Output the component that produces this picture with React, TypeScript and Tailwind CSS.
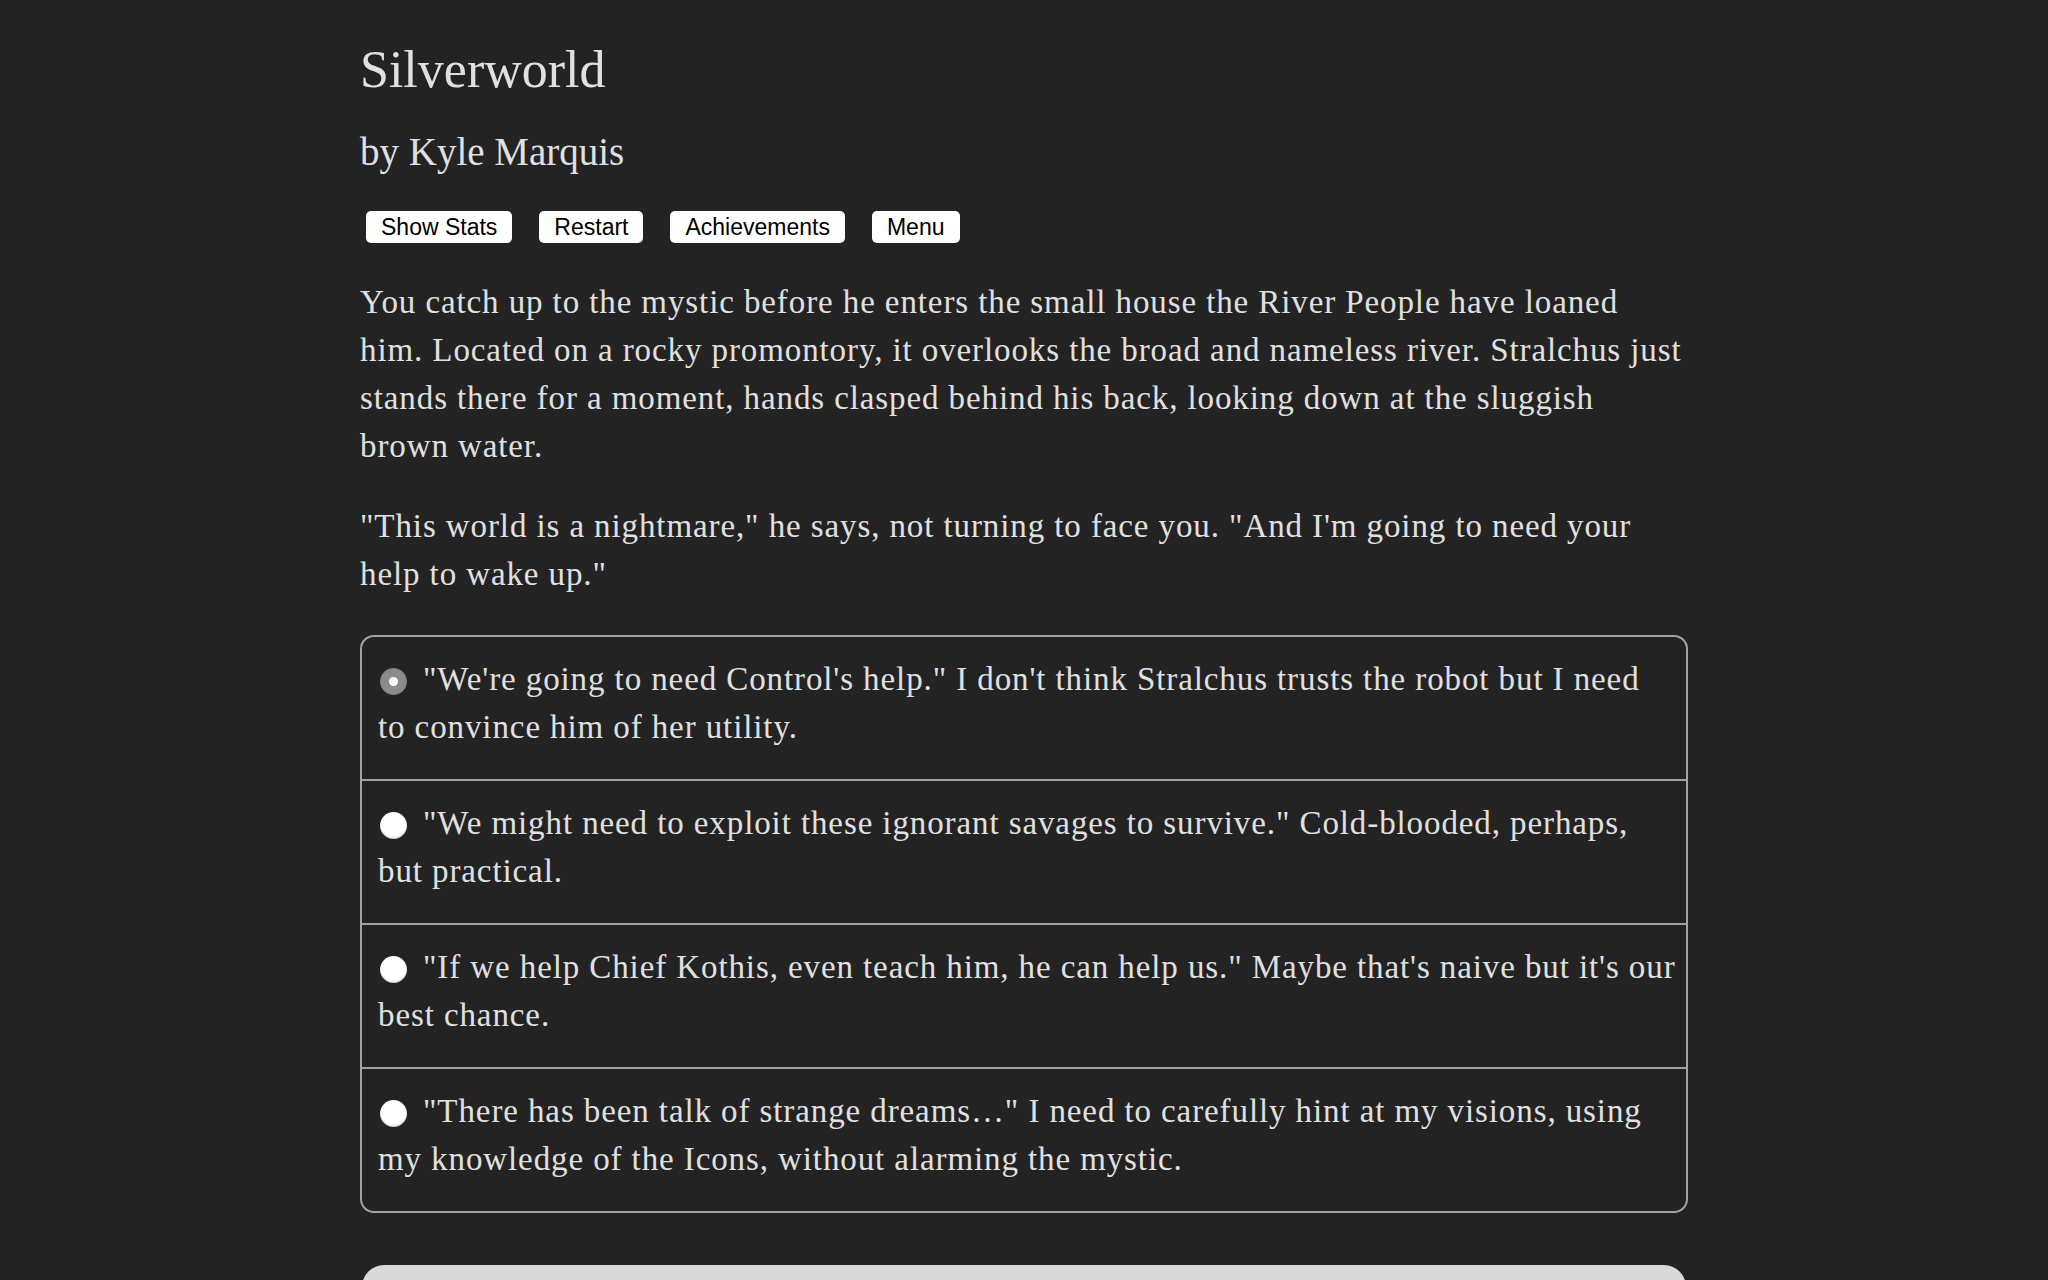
import React from "react";

function Radio({ checked }: { checked?: boolean }) {
  if (checked) {
    return (
      <span className="relative inline-block w-[27px] h-[27px] rounded-full bg-[#8c8c8c] shadow-[inset_0_0_2px_rgba(0,0,0,0.35)] align-[-5px] ml-[2px] mr-[16px]">
        <span className="absolute left-[9px] top-[9px] w-[9px] h-[9px] rounded-full bg-white" />
      </span>
    );
  }
  return (
    <span className="inline-block w-[27px] h-[27px] rounded-full bg-white shadow-[inset_0_-1px_2px_rgba(0,0,0,0.25)] align-[-5px] ml-[2px] mr-[16px]" />
  );
}

const choices: { lines: [string, string]; checked?: boolean }[] = [
  {
    lines: [
      "\"We're going to need Control's help.\" I don't think Stralchus trusts the robot but I need",
      "to convince him of her utility.",
    ],
    checked: true,
  },
  {
    lines: [
      "\"We might need to exploit these ignorant savages to survive.\" Cold-blooded, perhaps,",
      "but practical.",
    ],
  },
  {
    lines: [
      "\"If we help Chief Kothis, even teach him, he can help us.\" Maybe that's naive but it's our",
      "best chance.",
    ],
  },
  {
    lines: [
      "\"There has been talk of strange dreams\u2026\" I need to carefully hint at my visions, using",
      "my knowledge of the Icons, without alarming the mystic.",
    ],
  },
];

export default function App() {
  return (
    <div className="h-[1280px] overflow-hidden bg-[#232323] text-[#e0e0e0] font-['Liberation_Serif',serif]">
      <div className="mx-auto w-[1328px] pt-[40px]">
        <h1 className="text-[52px] leading-[60px] font-normal">Silverworld</h1>
        <h2 className="mt-[30px] text-[39px] leading-[44px] font-normal">by Kyle Marquis</h2>
        <div className="mt-[37px] ml-[6px] flex gap-[27px] font-['Liberation_Sans',sans-serif]">
          {["Show Stats", "Restart", "Achievements", "Menu"].map((b) => (
            <button
              key={b}
              className="h-[32px] px-[15px] bg-white text-black rounded-[5px] text-[23px] leading-[32px]"
            >
              {b}
            </button>
          ))}
        </div>
        <p className="mt-[35px] text-[33px] leading-[48px] tracking-[0.9px] whitespace-nowrap">
          You catch up to the mystic before he enters the small house the River People have loaned
          <br />
          him. Located on a rocky promontory, it overlooks the broad and nameless river. Stralchus just
          <br />
          stands there for a moment, hands clasped behind his back, looking down at the sluggish
          <br />
          brown water.
        </p>
        <p className="mt-[32px] text-[33px] leading-[48px] tracking-[0.9px] whitespace-nowrap">
          "This world is a nightmare," he says, not turning to face you. "And I'm going to need your
          <br />
          help to wake up."
        </p>
        <div className="mt-[37px] border-2 border-[#a3a3a3] rounded-[14px] overflow-hidden">
          {choices.map((c, i) => (
            <div
              key={i}
              className={
                "pl-[16px] pt-[18px] pb-[28px] text-[33px] leading-[48px] tracking-[0.9px] whitespace-nowrap " +
                (i > 0 ? "border-t-2 border-[#a3a3a3]" : "")
              }
            >
              <Radio checked={c.checked} />
              {c.lines[0]}
              <br />
              {c.lines[1]}
            </div>
          ))}
        </div>
        <div className="mt-[52px] mx-[2px] h-[80px] bg-[#d9d9d9] rounded-t-[22px]" />
      </div>
    </div>
  );
}
